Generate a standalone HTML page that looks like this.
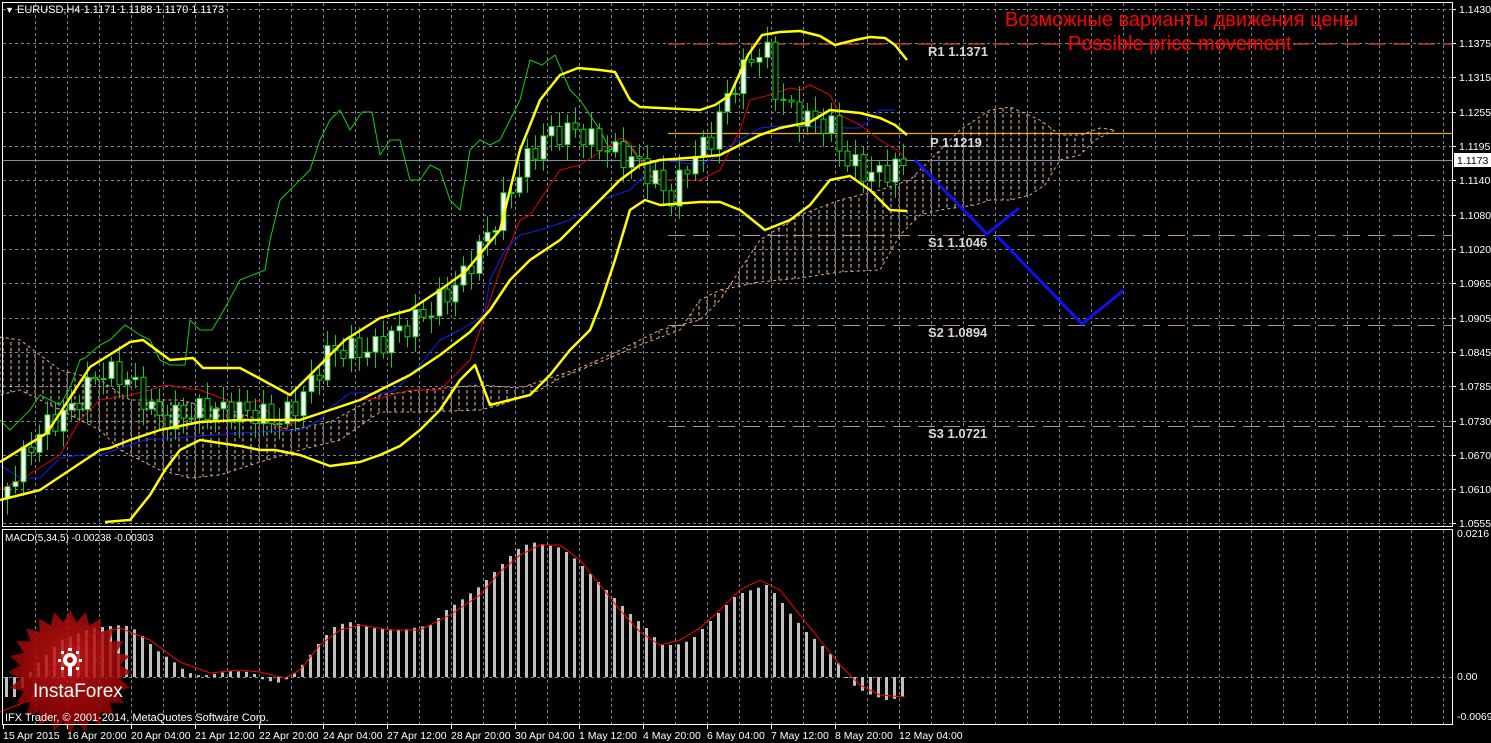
<!DOCTYPE html>
<html><head><meta charset="utf-8"><style>
html,body{margin:0;padding:0;background:#000;width:1491px;height:743px;overflow:hidden}
svg{display:block}
text{font-family:"Liberation Sans",sans-serif}
</style></head><body>
<svg id="s" width="1491" height="743" xmlns="http://www.w3.org/2000/svg">
<defs>
<pattern id="cl" width="8" height="6" patternUnits="userSpaceOnUse"><line x1="3" y1="0" x2="3" y2="3.5" stroke="#e8c8b0" stroke-width="1"/></pattern>
<radialGradient id="rg" cx="50%" cy="40%" r="60%"><stop offset="0" stop-color="#d01818"/><stop offset="1" stop-color="#8a0000"/></radialGradient>
</defs>
<rect width="1491" height="743" fill="#000"/>
<g id="grid"></g>
<polygon points="0,337 20,340 40,355 60,370 100,380 130,400 180,400 200,405 230,410 260,420 290,430 330,422 380,395 420,390 480,385 520,388 580,368 620,350 660,330 700,320 720,300 760,240 800,215 840,200 880,190 910,180 940,150 960,130 990,110 1010,107 1040,120 1060,135 1080,135 1100,128 1115,130 1095,140 1080,155 1060,160 1045,185 1030,195 1010,200 990,200 975,205 940,210 920,215 900,235 880,270 840,272 800,278 760,282 720,290 700,300 680,330 640,345 600,362 560,378 540,390 500,405 480,410 420,412 380,412 340,440 300,450 260,462 220,475 190,478 160,470 120,450 100,430 80,420 60,410 40,400 20,390 0,395" fill="url(#cl)" stroke="#e8a878" stroke-width="1" stroke-dasharray="3,3"/>
<line x1="668" y1="44" x2="1452" y2="44" stroke="#e04020" stroke-width="1.3" stroke-dasharray="17,8"/>
<line x1="668" y1="133.5" x2="1452" y2="133.5" stroke="#f0b000" stroke-width="1.2"/>
<line x1="668" y1="235.5" x2="1452" y2="235.5" stroke="#b89080" stroke-width="1" stroke-dasharray="17,8"/>
<line x1="668" y1="325.5" x2="1452" y2="325.5" stroke="#b89080" stroke-width="1" stroke-dasharray="17,8"/>
<line x1="668" y1="426.5" x2="1452" y2="426.5" stroke="#b89080" stroke-width="1" stroke-dasharray="17,8"/>
<line x1="2" y1="160.5" x2="1452" y2="160.5" stroke="#8090a0" stroke-width="1"/>
<g font-family="Liberation Mono,monospace" font-weight="bold" font-size="13" fill="#d8d8d8">
<text x="928" y="56">R1 1.1371</text><text x="930" y="147">P 1.1219</text>
<text x="928" y="247">S1 1.1046</text><text x="928" y="337">S2 1.0894</text><text x="928" y="438">S3 1.0721</text></g>
<g fill="none" stroke-linejoin="round">
<polyline stroke="#10d010" stroke-width="1" points="0,420 10,430 20,420 30,410 40,395 50,400 60,405 70,388 80,360 85,358 100,345 110,340 125,325 140,335 150,340 160,360 170,365 185,365 190,320 200,330 212,330 225,308 240,280 265,270 270,240 280,200 290,190 300,180 310,170 320,140 330,120 340,110 350,130 362,112 372,112 380,155 390,140 400,140 410,180 420,180 430,165 440,170 450,200 460,210 470,150 480,140 490,145 500,140 520,100 530,60 542,65 555,55 570,90 580,100 600,130 610,150 625,140 640,160 650,175 660,185"/>
<polyline stroke="#e00000" stroke-width="1" points="0,490 20,480 60,455 80,420 100,400 130,395 150,390 165,385 200,390 240,405 260,400 280,430 300,420 330,410 360,400 380,398 410,390 440,390 460,370 470,360 490,300 500,270 520,220 530,215 540,200 560,170 580,165 600,152 620,138 630,143 640,160 660,180 700,180 720,170 740,130 750,100 770,95 790,88 800,90 810,85 830,95 840,115 860,125 880,140 900,152 907,160"/>
<polyline stroke="#1020f0" stroke-width="1" points="0,465 20,478 40,478 60,458 80,455 100,455 145,440 240,433 300,430 320,420 330,408 350,393 385,393 395,390 420,365 440,340 460,330 480,318 485,310 490,280 505,250 520,235 540,230 570,220 600,200 630,190 660,160 700,165 720,155 730,145 760,128 790,125 830,128 860,128 870,120 880,110 895,110"/>
</g>
<g id="candles"></g>
<g fill="none" stroke="#ffff00" stroke-width="2.5" stroke-linejoin="round">
<polyline points="0,462 47,433 90,367 130,342 143,340 170,360 193,358 203,368 240,368 257,377 290,395 300,385 320,365 345,340 380,318 410,310 440,290 465,272 485,248 500,230 520,150 540,100 560,75 578,68 600,70 615,72 630,100 640,107 700,110 715,105 730,95 748,55 762,35 780,32 800,31 820,36 835,45 855,40 870,37 885,38 895,45 907,60"/>
<polyline points="0,500 40,490 70,470 100,450 110,448 130,440 160,430 200,422 240,420 300,420 330,410 360,400 380,390 410,375 440,355 470,332 490,310 510,280 530,260 560,240 580,220 600,200 620,180 640,165 660,160 700,157 720,155 740,145 760,135 780,128 810,122 830,110 860,113 880,118 895,125 907,135"/>
<polyline points="105,522 130,520 150,495 165,470 180,450 200,440 240,446 260,450 275,450 300,455 330,466 360,462 380,455 400,446 420,430 440,410 460,380 475,365 490,405 510,400 530,395 550,375 570,350 590,330 600,305 615,260 630,210 645,200 660,205 700,202 720,202 740,210 765,230 790,220 810,205 830,180 850,176 870,190 890,210 907,211"/>
</g>
<polyline fill="none" stroke="#1010f0" stroke-width="3" points="915,160 987,234 1019,208"/>
<polyline fill="none" stroke="#1010f0" stroke-width="3" points="997,236 1082,324 1124,290"/>
<text x="1005" y="26" font-size="20" fill="#ff0000">Возможные варианты движения цены</text>
<text x="1068" y="50" font-size="20" fill="#ff0000">Possible price movement</text>
<g id="macd"></g>
<polyline fill="none" stroke="#ff0000" stroke-width="1" points="0,712 30,700 60,660 90,635 120,628 150,640 180,662 210,673 240,670 260,672 285,678 300,670 320,645 340,630 360,625 390,630 420,630 450,615 480,595 500,572 520,555 540,545 560,545 580,560 600,585 620,610 640,632 660,645 680,640 700,628 720,610 740,590 760,580 780,590 800,615 820,640 840,665 860,685 880,695 905,697"/>
<g opacity="0.85"><polygon id="star" fill="url(#rg)"/></g>
<g fill="#fff"><circle cx="70" cy="660" r="7"/><circle cx="70" cy="660" r="3" fill="#b00"/>
<rect x="68" y="664" width="4" height="12"/><rect x="61" y="651" width="3" height="3"/><rect x="76" y="651" width="3" height="3"/><rect x="61" y="667" width="3" height="3"/><rect x="76" y="667" width="3" height="3"/><rect x="68" y="648" width="4" height="3"/><rect x="58" y="659" width="3" height="3"/><rect x="79" y="659" width="3" height="3"/></g>
<text x="33" y="697" font-size="19" fill="#fff">InstaForex</text>
<text x="5" y="721" font-size="11" fill="#fff">IFX Trader, © 2001-2014, MetaQuotes Software Corp.</text>
<text x="5" y="541" font-size="10" fill="#fff">MACD(5,34,5) -0.00238 -0.00303</text>
<text x="5" y="13" font-size="11" fill="#fff"><tspan font-size="9">▼</tspan> EURUSD,H4  1.1171 1.1188 1.1170 1.1173</text>
<g fill="none" stroke="#fff" stroke-width="1">
<rect x="2.5" y="2.5" width="1450" height="524"/>
<rect x="2.5" y="529.5" width="1450" height="195"/>
</g>
<g id="axis" font-size="10.5" fill="#fff"></g>
<rect x="1454" y="153" width="37" height="14" fill="#fff"/>
<text x="1457" y="164" font-size="10.5" fill="#000">1.1173</text>
</svg>
<script>
(function(){
var NS="http://www.w3.org/2000/svg";
function el(p,t,a,txt){var e=document.createElementNS(NS,t);for(var k in a)e.setAttribute(k,a[k]);if(txt!=null)e.textContent=txt;p.appendChild(e);return e;}
var g=document.getElementById('grid');
var x,j;
for(x=35;x<1452;x+=32){el(g,'line',{x1:x+.5,y1:3,x2:x+.5,y2:526,stroke:'#7a8590','stroke-dasharray':'3,3'});el(g,'line',{x1:x+.5,y1:530,x2:x+.5,y2:724,stroke:'#7a8590','stroke-dasharray':'3,3'});}
var py=[9,43,77,112,146,180,215,249,283,318,352,386,421,455,489,523];
var pl=['1.1430','1.1375','1.1315','1.1255','1.1195','1.1140','1.1080','1.1020','1.0965','1.0905','1.0845','1.0785','1.0730','1.0670','1.0610','1.0555'];
var ax=document.getElementById('axis');
py.forEach(function(y,i){el(g,'line',{x1:3,y1:y+.5,x2:1452,y2:y+.5,stroke:'#7a8590','stroke-dasharray':'3,3'});el(ax,'line',{x1:1452,y1:y+.5,x2:1456,y2:y+.5,stroke:'#fff'});el(ax,'text',{x:1459,y:y+4},pl[i]);});
el(g,'line',{x1:3,y1:677.5,x2:1452,y2:677.5,stroke:'#7a8590','stroke-dasharray':'3,3'});
[[537,'0.0216'],[680,'0.00'],[720,'-0.00699']].forEach(function(a){el(ax,'text',{x:1457,y:a[0]},a[1]);});
var dl=['15 Apr 2015','16 Apr 20:00','20 Apr 04:00','21 Apr 12:00','22 Apr 20:00','24 Apr 04:00','27 Apr 12:00','28 Apr 20:00','30 Apr 04:00','1 May 12:00','4 May 20:00','6 May 04:00','7 May 12:00','8 May 20:00','12 May 04:00'];
dl.forEach(function(t,i){var xx=3+64*i;el(ax,'line',{x1:xx+.5,y1:725,x2:xx+.5,y2:729,stroke:'#fff'});el(ax,'text',{x:xx,y:739},t);});
function interp(k,xx){for(var i=0;i<k.length-1;i++){if(xx<=k[i+1][0]){var a=k[i],b=k[i+1];return a[1]+(b[1]-a[1])*(xx-a[0])/(b[0]-a[0]);}}return k[k.length-1][1];}
var ck=[[5,490],[40,430],[70,410],[100,370],[130,380],[160,420],[200,410],[240,410],[280,420],[300,400],[330,350],[370,350],[400,330],[430,310],[460,280],[490,230],[520,170],[545,135],[575,130],[590,140],[610,150],[640,165],[660,185],[670,200],[690,160],[710,140],[730,90],[750,60],[765,45],[775,90],[790,110],[810,120],[830,125],[845,160],[870,175],[905,165]];
var cg=document.getElementById('candles');var prev=interp(ck,0);
for(x=7;x<=905;x+=8){j=(x-7)/8;var cv=interp(ck,x)+Math.sin(j*2.3)*12;var o=prev;prev=cv;
var tp=Math.min(o,cv),bt=Math.max(o,cv);var hi=tp-4-Math.abs(Math.sin(j*1.7))*12,lo=bt+4+Math.abs(Math.cos(j*1.3))*12;
el(cg,'line',{x1:x+.5,y1:hi.toFixed(1),x2:x+.5,y2:lo.toFixed(1),stroke:'#10d010'});
var h=Math.max(bt-tp,1);el(cg,'rect',{x:x-2,y:tp.toFixed(1),width:5,height:h.toFixed(1),fill:cv<o?'#fff':'#000',stroke:'#10d010','stroke-width':1});}
var mk=[[5,697],[15,697],[20,690],[30,670],[40,660],[60,640],[90,628],[120,625],[130,627],[140,635],[155,650],[170,660],[185,672],[200,676],[230,671],[250,672],[262,680],[280,683],[295,672],[305,660],[320,640],[335,625],[350,622],[370,628],[400,630],[430,625],[445,610],[460,600],[480,585],[500,565],[515,550],[530,542],[545,545],[560,548],[575,560],[590,575],[600,585],[615,600],[630,615],[645,628],[660,645],[675,645],[690,640],[705,625],[720,610],[735,595],[750,590],[765,585],[775,595],[790,615],[805,632],[820,645],[835,660],[845,677],[855,688],[870,695],[885,700],[900,698],[905,690]];
var m=document.getElementById('macd');
for(x=5;x<=905;x+=8){var yv=interp(mk,x);var t0=Math.min(yv,677),b0=Math.max(yv,677);el(m,'rect',{x:x,y:t0.toFixed(1),width:3,height:Math.max(b0-t0,1).toFixed(1),fill:'#c0c0c0'});}
var pts=[];for(var i=0;i<48;i++){var a=i*Math.PI/24,r=i%2?50:62;pts.push((70+r*Math.cos(a)).toFixed(1)+','+(672+r*Math.sin(a)).toFixed(1));}
document.getElementById('star').setAttribute('points',pts.join(' '));
})();
</script>
</body></html>
